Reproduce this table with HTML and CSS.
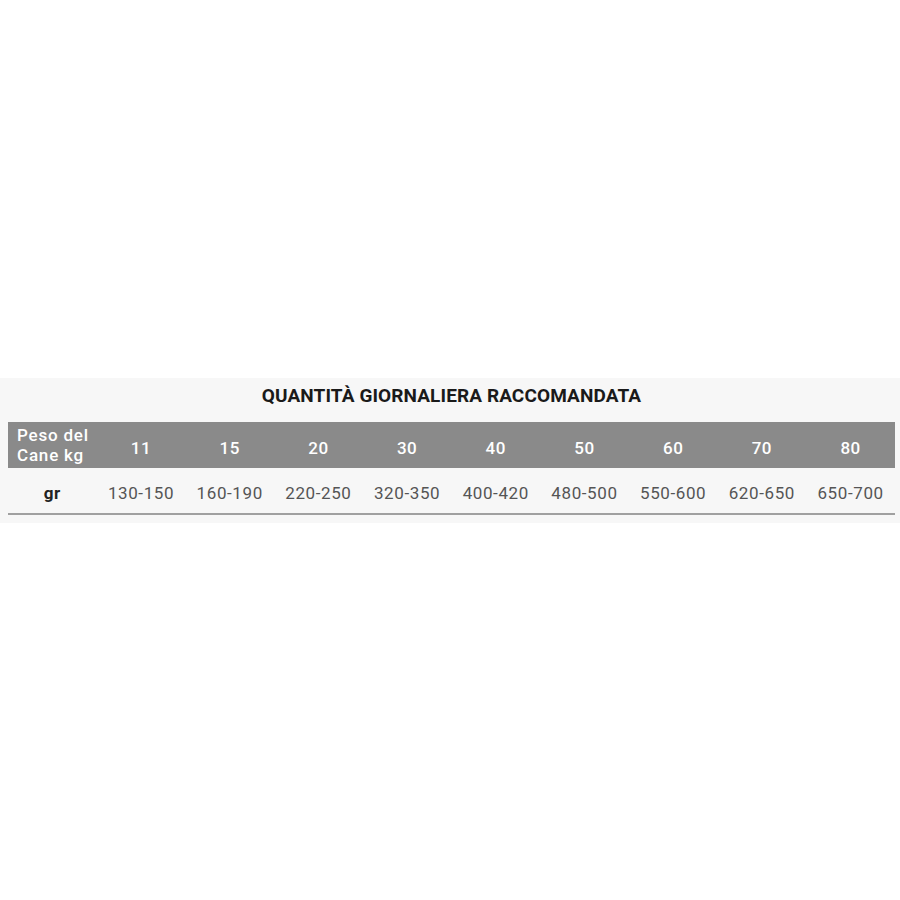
FILE: index.html
```html
<!DOCTYPE html>
<html lang="it">
<head>
<meta charset="utf-8">
<title>Quantità giornaliera raccomandata</title>
<link rel="stylesheet" href="styles.css">
</head>
<body>
<section class="band">
  <h2 class="title">QUANTITÀ GIORNALIERA RACCOMANDATA</h2>
  <table class="feed">
    <thead>
      <tr>
        <th class="label">Peso del<br>Cane kg</th>
        <th>11</th><th>15</th><th>20</th><th>30</th><th>40</th><th>50</th><th>60</th><th>70</th><th>80</th>
      </tr>
    </thead>
    <tbody>
      <tr>
        <td class="label">gr</td>
        <td>130-150</td><td>160-190</td><td>220-250</td><td>320-350</td><td>400-420</td><td>480-500</td><td>550-600</td><td>620-650</td><td>650-700</td>
      </tr>
    </tbody>
  </table>
</section>
</body>
</html>
```

FILE: styles.css
```css
html, body {
  margin: 0;
  padding: 0;
  background: #ffffff;
}
body {
  font-family: Roboto, "Liberation Sans", sans-serif;
}
.band {
  margin-top: 378px;
  background: #f7f7f7;
  padding: 8px 5px 8px 8px;
}
.title {
  margin: 0 0 16px 0;
  text-align: center;
  font-size: 19px;
  line-height: 20px;
  font-weight: 700;
  color: #1a1a1a;
  letter-spacing: 0.1px;
}
.feed {
  width: 887px;
  border-collapse: collapse;
  table-layout: fixed;
}
.feed th, .feed td {
  text-align: center;
  padding: 0;
}
.feed thead tr {
  background: #8a8a8a;
  height: 46px;
}
.feed th {
  color: #ffffff;
  font-size: 17px;
  font-weight: 500;
  letter-spacing: 0.5px;
  padding-top: 5px;
}
.feed th.label {
  font-size: 17px;
  line-height: 20px;
  text-align: left;
  padding-left: 9px;
  padding-top: 0;
  letter-spacing: 0.8px;
}
.feed tbody tr {
  height: 46px;
  border-bottom: 2px solid #a0a0a0;
}
.feed td {
  color: #555555;
  font-size: 17px;
  font-weight: 400;
  letter-spacing: 0.6px;
  padding-top: 4px;
}
.feed td.label {
  color: #222222;
  font-weight: 700;
}
```
